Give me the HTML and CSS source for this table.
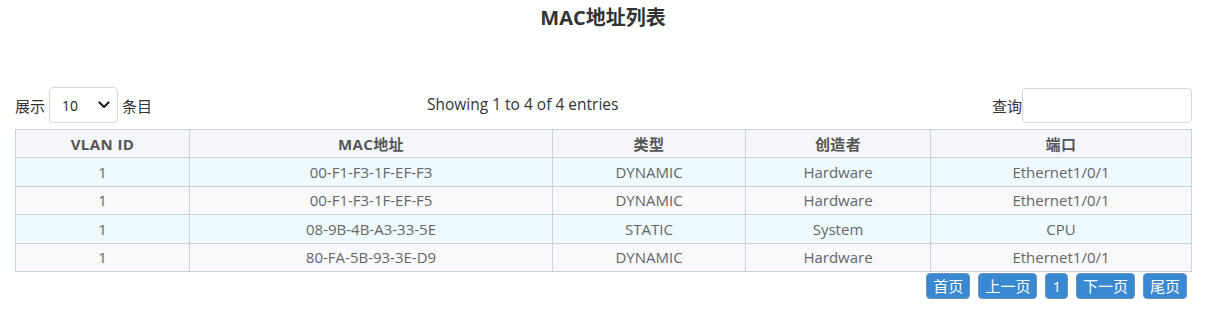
FILE: index.html
```html
<!DOCTYPE html>
<html lang="zh">
<head>
<meta charset="utf-8">
<title>MAC地址列表</title>
<link rel="stylesheet" href="styles.css">
</head>
<body>
<div class="page">
  <h1 class="title">MAC地址列表</h1>
  <div class="toolbar">
    <div class="length">
      <span>展示</span>
      <div class="select">
        <span class="select-value">10</span>
        <svg class="chev" width="12" height="8" viewBox="0 0 12 8"><path d="M1.5 1.5 L6 6 L10.5 1.5" fill="none" stroke="#222" stroke-width="2.2" stroke-linecap="round" stroke-linejoin="round"/></svg>
      </div>
      <span>条目</span>
    </div>
    <div class="info">Showing 1 to 4 of 4 entries</div>
    <div class="search">
      <span>查询</span>
      <div class="search-input"></div>
    </div>
  </div>
  <table class="grid">
    <colgroup>
      <col class="c1"><col class="c2"><col class="c3"><col class="c4"><col class="c5">
    </colgroup>
    <thead>
      <tr><th>VLAN ID</th><th>MAC地址</th><th>类型</th><th>创造者</th><th>端口</th></tr>
    </thead>
    <tbody>
      <tr><td>1</td><td>00-F1-F3-1F-EF-F3</td><td>DYNAMIC</td><td>Hardware</td><td>Ethernet1/0/1</td></tr>
      <tr><td>1</td><td>00-F1-F3-1F-EF-F5</td><td>DYNAMIC</td><td>Hardware</td><td>Ethernet1/0/1</td></tr>
      <tr><td>1</td><td>08-9B-4B-A3-33-5E</td><td>STATIC</td><td>System</td><td>CPU</td></tr>
      <tr><td>1</td><td>80-FA-5B-93-3E-D9</td><td>DYNAMIC</td><td>Hardware</td><td>Ethernet1/0/1</td></tr>
    </tbody>
  </table>
  <div class="pager">
    <span class="btn">首页</span>
    <span class="btn">上一页</span>
    <span class="btn num">1</span>
    <span class="btn">下一页</span>
    <span class="btn">尾页</span>
  </div>
</div>
</body>
</html>
```

FILE: styles.css
```css
html, body {
  margin: 0;
  padding: 0;
  background: #ffffff;
}
body {
  font-family: "Open Sans", "Noto Sans CJK SC", sans-serif;
  font-size: 15px;
  color: #333;
}
.page {
  padding: 0 15px;
}
.title {
  margin: 0;
  padding-top: 6px;
  height: 81px;
  box-sizing: border-box;
  text-align: center;
  font-size: 20px;
  line-height: 24px;
  font-weight: 700;
  color: #333;
}
.toolbar {
  display: flex;
  align-items: flex-start;
  height: 42px;
  margin-top: 6px;
}
.length {
  display: flex;
  align-items: center;
  gap: 4px;
  height: 36px;
  width: 412px;
  flex: none;
}
.select {
  box-sizing: border-box;
  width: 69px;
  height: 36px;
  border: 1px solid #d6d9dd;
  border-radius: 4px;
  display: flex;
  align-items: center;
  justify-content: space-between;
  padding: 0 7px 0 12px;
}
.select-value {
  color: #222;
  font-size: 14px;
}
.info {
  flex: 1;
  height: 36px;
  line-height: 35px;
  color: #333;
  font-size: 15.5px;
}
.search {
  display: flex;
  justify-content: flex-end;
  align-items: center;
  margin-top: 1px;
  height: 34px;
}
.search span {
  margin-right: 0;
}
.search-input {
  box-sizing: border-box;
  width: 170px;
  height: 35px;
  border: 1px solid #d6d9dd;
  border-radius: 4px;
  margin-right: -1px;
}
.grid {
  width: 100%;
  border-collapse: collapse;
  table-layout: fixed;
  color: #666;
}
.c1 { width: 174px; }
.c2 { width: 363px; }
.c3 { width: 193px; }
.c4 { width: 185px; }
.c5 { width: 261px; }
.grid th, .grid td {
  border: 1px solid #c9d0de;
  text-align: center;
  padding: 0;
  height: 27.4px;
  font-weight: 400;
}
.grid th {
  background: #f5f6fa;
  font-weight: 700;
  color: #555;
  letter-spacing: 0.4px;
}
.grid tbody tr:nth-child(odd) td {
  background: #eefafe;
}
.grid tbody tr:nth-child(even) td {
  background: #f9f9fb;
}
.pager {
  display: flex;
  justify-content: flex-end;
  gap: 8px;
  padding: 1px 4px 0 0;
}
.btn {
  box-sizing: border-box;
  height: 26px;
  line-height: 24px;
  padding: 0 6px;
  background: #3a87d2;
  border: 1px solid #6c93bc;
  border-radius: 4px;
  color: #fff;
  font-size: 15px;
}
.btn.num {
  padding: 0 6px;
}
```
